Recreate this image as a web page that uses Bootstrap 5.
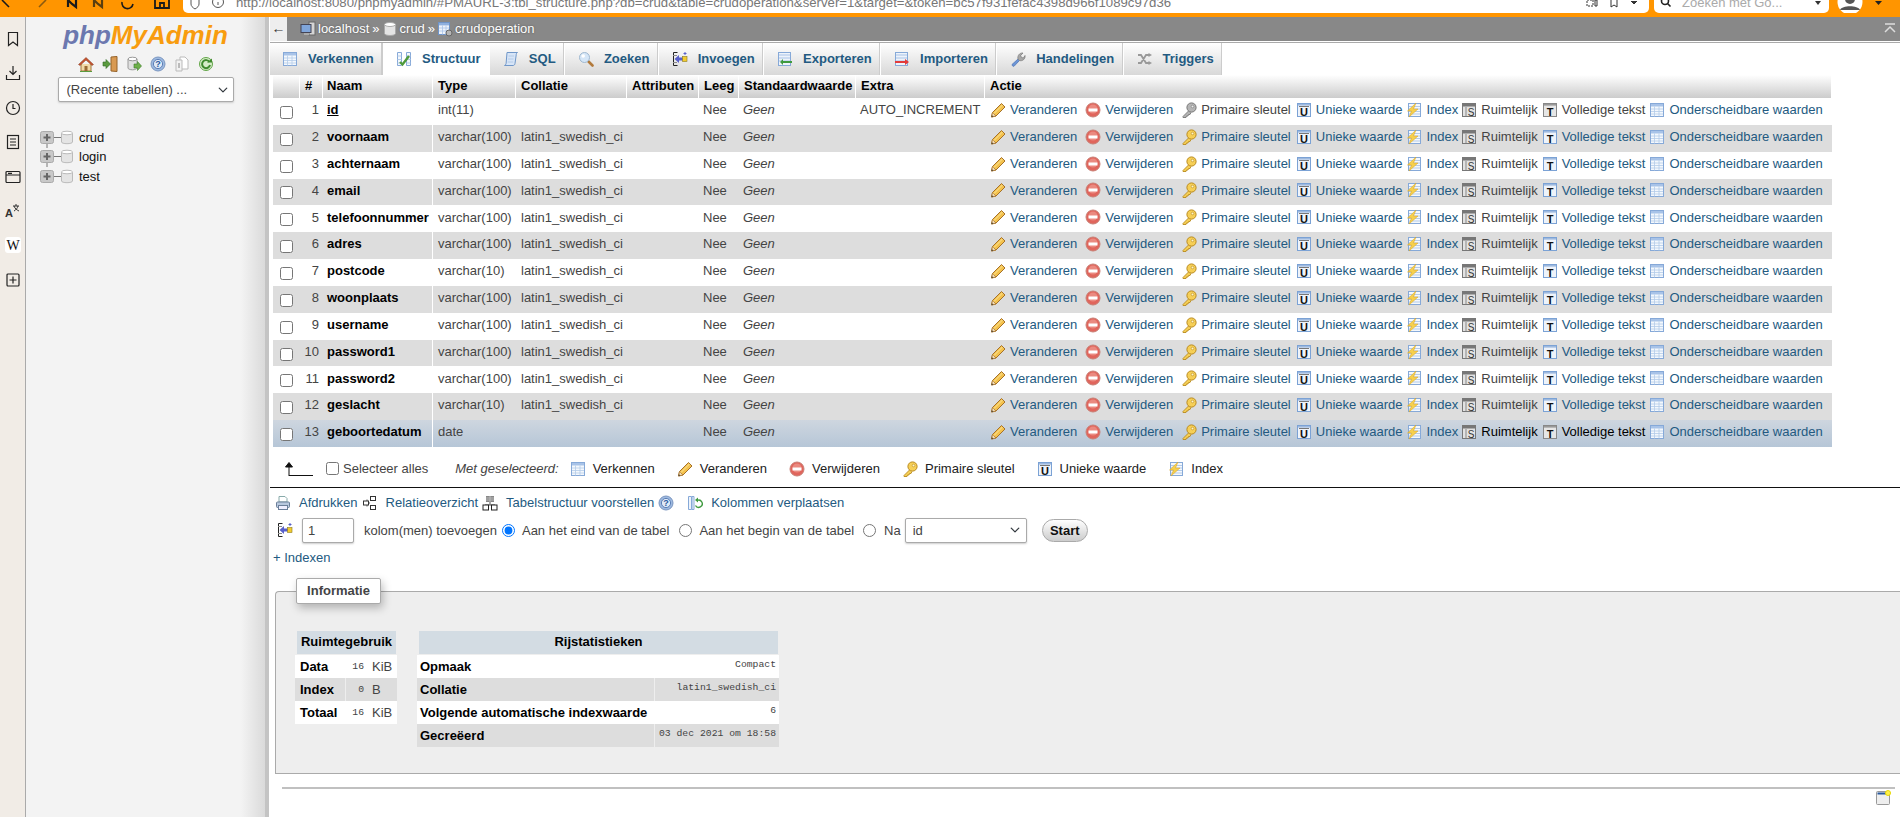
<!DOCTYPE html>
<html lang="nl">
<head>
    <meta charset="UTF-8">
    <meta name="viewport" content="width=device-width, initial-scale=1.0">
    <title>phpMyAdmin</title>
    <link href="https://cdn.jsdelivr.net/npm/bootstrap@5.3.0/dist/css/bootstrap.min.css" rel="stylesheet">
    <style>
        html, body { height: 100%; }
        body { font-family: "Liberation Sans", Arial, sans-serif; font-size: 13px; line-height: 1.2; color: #444; background: #fff; overflow: hidden; }
        a { color: #235a81; text-decoration: none; }
        .ico { width: 16px; height: 16px; flex: none; display: block; }

        /* browser chrome, cut off at the top of the capture */
        .browser-bar { height: 17px; background: #ff9500; overflow: hidden; flex: none; }
        .tool-svg { width: 183px; height: 13px; flex: none; display: block; }
        .url-box { width: 1466px; height: 13px; background: #fff; border-radius: 0 0 5px 5px; overflow: hidden; flex: none; }
        .url-text { margin: -5px 0 0 5px; color: #777; font-size: 13.2px; white-space: nowrap; line-height: 16px; width: 950px; overflow: hidden; }
        .search-box { width: 175px; height: 13px; margin-left: 5px; background: #fff; border-radius: 0 0 5px 5px; overflow: hidden; flex: none; }
        .search-text { margin: -5px 0 0 6px; color: #aaa; line-height: 16px; width: 125px; }
        .browser-right { width: 71px; height: 13px; flex: none; display: block; }

        .app-body { height: 800px; }
        .side-strip { width: 26px; flex: none; background: #f1ece6; border-right: 1px solid #aaa; padding-top: 14px; }
        .strip-ico { width: 16px; height: 16px; display: block; margin: 0 0 18.4px 0; }
        .nav-panel { width: 239px; flex: none; background: linear-gradient(to right, #f3f3f3 0, #f3f3f3 90%, #dadada 100%); }
        .logo-text { margin-top: 5px; font-size: 26px; line-height: 27px; font-weight: 700; font-style: italic; color: #f89c0e; letter-spacing: 0; }
        .logo-text span { color: #6c78af; }
        .nav-ico-row { height: 16px; margin-top: 7px; gap: 8px; }
        .recent-select { width: 176px; height: 25px; margin-top: 5px; padding: 0 20px 0 8px; font-size: 13px; color: #444; border: 1px solid #aaa; border-radius: 2px; background-position: right 4px center; background-size: 12px 10px; font-family: inherit; box-shadow: 0 1px 2px #ccc; }
        .db-tree { margin: 26px 0 0 14px; list-style: none; padding: 0; }
        .db-tree li { height: 19.5px; display: flex; align-items: center; color: #111; }
        .tree-svg { width: 39px; height: 20px; flex: none; display: block; }
        .splitter { width: 4px; flex: none; background: #c4c4c4; margin-right: 1px; }

        .main-col { width: 1630px; flex: none; }
        .crumb-bar { height: 26px; background: #888; border-bottom: 1px solid #aaa; box-shadow: inset 0 -1px 0 #fff; color: #fff; flex: none; padding-bottom: 2px; }
        .back-box { width: 17px; height: 24px; background: #eee; color: #333; text-align: center; line-height: 22px; font-size: 14px; margin-right: 13px; }
        .crumb-item { text-shadow: 0 0 2px #555; }
        .crumb-sep { margin: 0 2px 0 3px; }
        .crumb-bar .ico { margin-right: 2px; }
        .crumb-up { margin-left: auto; margin-right: 2px; }

        .tab-row { height: 32px; list-style: none; margin: 0; padding: 0; flex: none; }
        .tab-item { display: flex; align-items: center; padding: 0 8.3px 0 13px; font-weight: 700; color: #235a81; background: linear-gradient(to bottom, #fff, #d8d8d8); border-right: 1px solid #fff; box-shadow: inset -1px 0 0 #ccc; }
        .tab-item:first-child { padding-left: 12px; }
        .tab-item .ico { margin-right: 10px; }
        .tab-item.is-active { background: #fff; box-shadow: 1px 0 0 #ccc, -1px 0 0 #ccc; }

        .fld-tbl { margin-left: 3px; width: 1559px; table-layout: fixed; border-collapse: separate; border-spacing: 0; flex: none; }
        .fld-tbl th { height: 23px; font-weight: 700; color: #000; background: linear-gradient(to bottom, #fff, #ccc); padding: 0 0 2px 5px; border-right: 1px solid #fff; white-space: nowrap; }
        .fld-tbl th.head-name { padding-left: 4px; }
        .fld-tbl td { height: 26.846px; padding: 0 0 3px 4px; white-space: nowrap; vertical-align: middle; }
        .fld-tbl tbody tr:nth-child(even) td { background: #ddd; }
        .fld-tbl tbody tr.is-hover td { background: linear-gradient(to bottom, #ced6df, #b6c6d7); }
        .fld-tbl input { margin: 2px 0 0 7px; display: block; }
        .fld-tbl td.cell-chk { padding: 0; }
        .fld-tbl td.cell-num { text-align: right; padding: 0 4px 3px 0; }
        .fld-tbl td.cell-name { font-weight: 700; color: #000; border-right: 1px solid #fff; }
        .fld-tbl td.cell-type { padding-left: 5px; }
        .fld-tbl td.cell-act { padding-left: 5px; }
        .act-row { display: flex; align-items: center; }
        .act-item { display: flex; align-items: center; margin-right: 4px; color: #235a81; }
        .act-item .ico { margin-right: 4px; }
        .act-item.wide-gap { margin-right: 8px; }
        .act-item.mid-gap { margin-right: 5px; }
        .act-item.small-gap { margin-right: 3px; }
        .act-item.is-off { color: #444; }
        .is-hover .act-item.is-off { color: #000; }

        .sel-bar { height: 41px; padding: 4px 0 0 15px; border-bottom: 1px solid #111; flex: none; }
        .sel-bar input { margin: 0 4px 0 13px; }
        .sel-note { font-style: italic; margin: 0 11px 0 27px; }
        .sel-item { color: #222; margin-right: 22px; }
        .sel-item .ico { margin-right: 7px; }
        .link-row { height: 30px; padding-left: 5px; flex: none; }
        .link-row .ico { margin-right: 8px; }
        .link-row .ico.help-ico { margin-right: 13px; }
        .link-row a { margin-right: 4px; }
        .form-row { height: 25px; padding-left: 7px; flex: none; }
        .form-row input[type=radio] { margin-top: 0; margin-right: 0; margin-bottom: 0; flex: none; }
        .col-count { width: 52px; height: 25px; margin: 0 10px 0 9px; padding: 0 5px; font-size: 13px; color: #444; border: 1px solid #aaa; border-radius: 2px; box-shadow: 0 1px 2px #ccc; }
        .gap-l5 { margin-left: 5px; }
        .gap-l7 { margin-left: 7px; }
        .gap-l8 { margin-left: 8px; }
        .gap-l9 { margin-left: 9px; }
        .gap-l10 { margin-left: 10px; }
        .after-select { width: 122px; height: 25px; margin-left: 4px; padding: 0 20px 0 7px; font-size: 13px; color: #444; font-family: inherit; border: 1px solid #aaa; border-radius: 2px; background-position: right 5px center; background-size: 12px 10px; box-shadow: 0 1px 2px #ccc; }
        .start-btn { margin-left: 15px; width: 46px; height: 23px; padding: 0; font-size: 13px; font-weight: 700; color: #111; background: linear-gradient(to bottom, #fff, #ccc); border: 1px solid #aaa; border-radius: 12px; }
        .index-link { margin: 7px 0 0 3px; height: 16px; flex: none; }

        .info-box { position: relative; height: 183px; margin: 25px 0 0 5px; background: #eee; border: 1px solid #aaa; border-right: 0; border-radius: 4px 0 0 0; padding: 39px 0 0 19px; flex: none; }
        .info-legend { position: absolute; left: 20px; top: -14px; width: 85px; height: 26px; background: #fff; border: 1px solid #aaa; border-radius: 2px; box-shadow: 2px 4px 8px rgba(0,0,0,.25); font-weight: 700; text-align: center; line-height: 24px; }
        .stat-tbl { border-collapse: separate; border-spacing: 0; }
        .stat-tbl th { height: 24px; text-align: center; font-weight: 700; color: #000; padding: 0 0 1px; background: #d3dce3; background-clip: padding-box; border-left: 2px solid transparent; border-right: 1px solid transparent; border-bottom: 1px solid transparent; }
        .stat-tbl td { height: 23px; background: #fff; padding: 0 3px; white-space: nowrap; }
        .stat-tbl tr:nth-child(even) td { background: #ddd; }
        .stat-tbl td:first-child { font-weight: 700; color: #000; border-right: 1px solid #fff; }
        .stat-tbl tr:nth-child(even) td:first-child { border-right-color: #eee; }
        .stat-use { width: 102px; }
        .stat-use td:first-child { width: 51px; padding-left: 5px; }
        .stat-row { width: 362px; margin-left: 20px; }
        .stat-row td:first-child { width: 238px; }
        .mono-val { font-family: "Liberation Mono", monospace; font-size: 9.75px; }
        .stat-row .mono-val { display: block; text-align: right; margin-top: -4px; }
        .stat-use .mono-val { display: inline-block; width: 15px; text-align: right; margin-right: 8px; vertical-align: 2px; }
        .foot-rule { height: 2px; margin: 13px 5px 0 12px; background: #c0c0c0; flex: none; }
        .foot-svg { width: 16px; height: 16px; margin: 1px 9px 0 auto; display: block; }
    </style>
</head>
<body>
    <!-- shared icons -->
    <svg width="0" height="0" class="d-block" aria-hidden="true">
        <defs>
            <symbol id="i-pencil" viewBox="0 0 16 16"><path d="M1.500 15l1-4.500L11.500 1.500l3.500 3.500-9 9z" fill="#f4c24d" stroke="#a5712a"/><path d="M1.500 15l1-4.500 3.500 3.500z" fill="#f3dcb5" stroke="#a5712a" stroke-width=".7"/><path d="M4 11.500l8.500-8.500" stroke="#fbe59a"/><path d="M1.500 15l.4-1.800 1.400 1.400z" fill="#333"/></symbol>
            <symbol id="i-remove" viewBox="0 0 16 16"><circle cx="8" cy="8" r="7" fill="#e0655c" stroke="#c98076"/><circle cx="8" cy="7" r="4.500" fill="#ea8a80"/><rect x="3.500" y="6.500" width="9" height="3" fill="#fff"/></symbol>
            <symbol id="i-key" viewBox="0 0 16 16"><path d="M7.500 9L2 14.500v1h3l.5-1.500H7l.5-1.500h1.500l1-2" fill="#f6cf56" stroke="#b98a1e" stroke-width=".9"/><circle cx="10.500" cy="5.500" r="4.600" fill="#f6cf56" stroke="#b98a1e"/><circle cx="11.500" cy="4.500" r="1.300" fill="#fff6c8" stroke="#b98a1e" stroke-width=".6"/></symbol>
            <symbol id="i-key-off" viewBox="0 0 16 16"><path d="M7.500 9L2 14.500v1h3l.5-1.500H7l.5-1.500h1.500l1-2" fill="#b5b5b5" stroke="#777" stroke-width=".9"/><circle cx="10.500" cy="5.500" r="4.600" fill="#b5b5b5" stroke="#777"/><circle cx="11.500" cy="4.500" r="1.300" fill="#eee" stroke="#777" stroke-width=".6"/></symbol>
            <symbol id="i-browse" viewBox="0 0 16 16"><rect x="1.500" y="1.500" width="13" height="13" fill="#f4f8fd" stroke="#86a9d8"/><rect x="2" y="2" width="12" height="2.500" fill="#a8c3e8"/><path d="M2 7h12M2 9.500h12M2 12h12M5.500 4.500v10M10 4.500v10" stroke="#b4cbe8" stroke-width=".8"/></symbol>
            <symbol id="i-unique" viewBox="0 0 16 16"><rect x="1.500" y="1.500" width="13" height="13" fill="#eef3fa" stroke="#7ba2d5"/><rect x="2" y="2" width="12" height="1.600" fill="#9db9df"/><path d="M3 4.500h10" stroke="#777"/><text x="8" y="14" text-anchor="middle" font-family="Liberation Sans" font-weight="700" font-size="11" fill="#111">U</text></symbol>
            <symbol id="i-index" viewBox="0 0 16 16"><rect x="2.500" y="1.500" width="12" height="13" fill="#f4f8fd" stroke="#86a9d8"/><path d="M3 4.500h11M3 7h11M3 9.500h11M3 12h11" stroke="#b4cbe8"/><path d="M10 1L1.500 9h4l-2.500 6L12 7H7.500z" fill="#f6d04e" stroke="#d9a320" stroke-width=".5"/></symbol>
            <symbol id="i-spatial" viewBox="0 0 16 16"><rect x="1.500" y="1.500" width="13" height="13" fill="#e2e2e2" stroke="#777"/><rect x="2" y="2" width="12" height="2.500" fill="#777"/><path d="M5 5v9" stroke="#888"/><text x="10" y="14" text-anchor="middle" font-family="Liberation Sans" font-size="10" fill="#333">S</text></symbol>
            <symbol id="i-full" viewBox="0 0 16 16"><rect x="1.500" y="1.500" width="13" height="13" fill="#eef3fa" stroke="#7ba2d5"/><rect x="2" y="2" width="12" height="1.600" fill="#9db9df"/><text x="8" y="14" text-anchor="middle" font-family="Liberation Sans" font-weight="700" font-size="11" fill="#111">T</text></symbol>
            <symbol id="i-full-off" viewBox="0 0 16 16"><rect x="1.500" y="1.500" width="13" height="13" fill="#e6e6e6" stroke="#888"/><rect x="2" y="2" width="12" height="1.600" fill="#999"/><text x="8" y="14" text-anchor="middle" font-family="Liberation Sans" font-weight="700" font-size="11" fill="#111">T</text></symbol>
            <symbol id="i-structure" viewBox="0 0 16 16"><path d="M1.500 1.500h4v13h-4zM10.500 1.500h4v13h-4z" fill="#f4f8fd" stroke="#86a9d8"/><path d="M1.500 5h4M1.500 8.500h4M1.500 12h4M10.500 5h4M10.500 8.500h4M10.500 12h4" stroke="#b4cbe8"/><path d="M4 11l2.500 2.500L13 5" fill="none" stroke="#4e9a3a" stroke-width="2.400"/></symbol>
            <symbol id="i-sql" viewBox="0 0 16 16"><path d="M4 1.500h10.500c-1 .5-1.300 1.500-1.300 2.500L12 12.500c-.2 1.300-1 2-2 2H1.500c1-.3 1.500-1.100 1.600-2z" fill="#d7e5f7" stroke="#7097c9"/><path d="M5.500 5h5.500M5 8h5.500M4.700 11h5.500" stroke="#b4cbe8"/></symbol>
            <symbol id="i-search" viewBox="0 0 16 16"><path d="M10 10l4.500 4.500" stroke="#b27a3c" stroke-width="2.600" stroke-linecap="round"/><circle cx="6.500" cy="6.500" r="5" fill="#d5e6f7" stroke="#9fb8d0"/><circle cx="5.200" cy="5" r="1.800" fill="#fff"/></symbol>
            <symbol id="i-insert" viewBox="0 0 16 16"><path d="M5.500 1.500h-4v13h4" fill="none" stroke="#222"/><path d="M1 4.500h4M1 11.500h4" stroke="#888"/><path d="M2.500 8L7 4v2.500h4v3H7V12z" fill="#5860c9"/><rect x="10.500" y="5.500" width="4.500" height="5" fill="#f3cb2f" stroke="#8a7a20" stroke-width=".6"/><path d="M13 1v3M11.500 2.500h3" stroke="#5860c9"/></symbol>
            <symbol id="i-export" viewBox="0 0 16 16"><rect x="1.500" y="1.500" width="12" height="13" fill="#eef3fa" stroke="#86a9d8"/><path d="M2 4h11M2 7h11M2 10h11" stroke="#a8c3e8"/><path d="M3 11l3-3v2h9v2H6v2z" fill="#3f9a3f"/></symbol>
            <symbol id="i-import" viewBox="0 0 16 16"><rect x="1.500" y="1.500" width="12" height="13" fill="#eef3fa" stroke="#86a9d8"/><path d="M2 4h11M2 7h11M2 10h11" stroke="#a8c3e8"/><path d="M1 10h10V8l4 3-4 3v-2H1z" fill="#e23b3b"/></symbol>
            <symbol id="i-wrench" viewBox="0 0 16 16"><path d="M8 8l-6 5.500c0 1 .8 2 2 1.800L9.500 9.500" fill="#6c95d6" stroke="#5478b8" stroke-width=".8"/><path d="M8 8c-.8-3 1.400-6.400 5-6l-2.300 2.400.7 2 2 .6L15 4.500c.6 3.300-2.400 6-5.500 5z" fill="#a8a8a8" stroke="#777" stroke-width=".7"/></symbol>
            <symbol id="i-trigger" viewBox="0 0 16 16"><path d="M1 4h3l5 8h3M1 12h3l5-8h3" fill="none" stroke="#999" stroke-width="1.800"/><path d="M11.500 2l3.500 2-3.500 2zM11.500 10l3.500 2-3.500 2z" fill="#999"/></symbol>
            <symbol id="i-print" viewBox="0 0 16 16"><path d="M4 1.500h6l2 2V7H4z" fill="#fff" stroke="#8aa"/><rect x="1.500" y="7" width="13" height="5.500" rx="1" fill="#b8c8de" stroke="#6b7f99"/><rect x="3.500" y="10.500" width="9" height="4" fill="#eef" stroke="#6b7f99"/></symbol>
            <symbol id="i-rel" viewBox="0 0 16 16"><path d="M2 8h6M5 4.500v7" stroke="#555"/><g fill="#fff" stroke="#333"><rect x="8.500" y="1.500" width="5" height="4"/><rect x="8.500" y="10.500" width="5" height="4"/><rect x="1.500" y="6" width="5" height="4"/></g></symbol>
            <symbol id="i-design" viewBox="0 0 16 16"><rect x="4" y="1" width="8" height="6" fill="#888"/><path d="M4 3h8M4 5h8M8 1v6" stroke="#ccc" stroke-width=".7"/><path d="M8 7v3M3 10h10" stroke="#555"/><g fill="#fff" stroke="#222"><rect x="1" y="10" width="5.500" height="5"/><rect x="9.500" y="10" width="5.500" height="5"/></g></symbol>
            <symbol id="i-help" viewBox="0 0 16 16"><circle cx="8" cy="8" r="7" fill="#9db9e0" stroke="#7b96c0"/><circle cx="8" cy="8" r="4.600" fill="#dfe9f7" stroke="#5c7fb5"/><text x="8" y="11" text-anchor="middle" font-family="Liberation Sans" font-weight="700" font-size="9" fill="#2c5a9e">?</text></symbol>
            <symbol id="i-move" viewBox="0 0 16 16"><path d="M1.500 1.500h3v13h-3zM5 1.500h2v13H5z" fill="#eef3fa" stroke="#86a9d8"/><path d="M10 5.500a3.600 3.600 0 1 1-1.500 5" fill="none" stroke="#3f9a3f" stroke-width="1.400"/><path d="M11 2.500v5l-3-2.500z" fill="#3f9a3f"/></symbol>
            <symbol id="i-db" viewBox="0 0 16 16"><path d="M2.500 3.500v9c0 1.200 2.500 2 5.500 2s5.500-.8 5.500-2v-9z" fill="#e4e4e4" stroke="#aaa"/><ellipse cx="8" cy="3.500" rx="5.500" ry="2" fill="#fff" stroke="#aaa"/></symbol>
            <symbol id="i-host" viewBox="0 0 16 16"><rect x="9" y="1" width="6" height="13" fill="#d5d5d5" stroke="#666"/><rect x="1" y="3.500" width="10" height="8" fill="#7fa5da" stroke="#445"/><rect x="4" y="12" width="5" height="2" fill="#aaa"/></symbol>
            <symbol id="i-tbl" viewBox="0 0 16 16"><rect x="1.500" y="1.500" width="11" height="12" fill="#eef3fa" stroke="#6f94c8"/><rect x="2" y="2" width="10" height="2.400" fill="#8fb0de"/><path d="M2 7h10M2 10h10M5.500 4.500v9M9 4.500v9" stroke="#a8c3e8" stroke-width=".8"/><circle cx="12" cy="12" r="3" fill="#b5b5b5" stroke="#666"/></symbol>
            <symbol id="i-home" viewBox="0 0 16 16"><path d="M3 8v7h10V8" fill="#f0d9a8" stroke="#a6793a"/><rect x="6.500" y="10" width="3" height="5" fill="#9b6b35"/><path d="M.5 8.500L8 1.500l7.500 7-1.500 1L8 4 2 9.500z" fill="#c9532f" stroke="#7a3a20" stroke-width=".5"/><path d="M2 15.500h12" stroke="#5a9a3f"/></symbol>
            <symbol id="i-exit" viewBox="0 0 16 16"><path d="M9 1l6-.5v15l-6-.5z" fill="#d99a52" stroke="#94622a"/><path d="M1 6h3V3.500L8.500 8 4 12.500V10H1z" fill="#5a9a3f" stroke="#2f6a25" stroke-width=".6"/></symbol>
            <symbol id="i-dbgo" viewBox="0 0 16 16"><path d="M2 3v9c0 1 2 1.800 4.500 1.800S11 13 11 12V3z" fill="#e0e0e0" stroke="#999"/><ellipse cx="6.500" cy="3" rx="4.500" ry="1.800" fill="#fff" stroke="#999"/><path d="M8 8h3.500V5.500L15.500 10l-4 4.500V12H8z" fill="#6eb04a" stroke="#3d7a2a" stroke-width=".6"/></symbol>
            <symbol id="i-docs" viewBox="0 0 16 16"><path d="M6 1h5l3 3v9H6z" fill="#fff" stroke="#bbb"/><path d="M2 4h6v11H2z" fill="#f2f2f2" stroke="#bbb"/><rect x="4" y="7" width="2" height="5" fill="#bbb"/></symbol>
            <symbol id="i-reload" viewBox="0 0 16 16"><circle cx="8" cy="8" r="6.500" fill="#d6ecc9" stroke="#62a647"/><path d="M11.500 6A4 4 0 1 0 12 9" fill="none" stroke="#3f8a2e" stroke-width="2"/><path d="M9 6.500h5v-4z" fill="#3f8a2e"/></symbol>
            <symbol id="i-window" viewBox="0 0 16 16"><rect x="1.500" y="1.500" width="13" height="13" rx="1" fill="#eee" stroke="#999"/><rect x="2.500" y="2.500" width="9" height="2" fill="#2a5a9e"/><circle cx="13" cy="3" r="2.500" fill="#fff14d" stroke="#e8d800"/></symbol>
        </defs>
    </svg>

    <div class="browser-bar d-flex">
        <svg class="tool-svg" viewBox="0 0 183 13" fill="none" stroke="#1a1a1a" stroke-width="1.600">
            <path d="M2 0l7 7"/><path d="M39 7l7-7" stroke="#8a5a10"/>
            <path d="M68 0v7M68 0l4 4 4 3V0" stroke-width="2.200"/><path d="M94 0v7M94 0l4 4 4 3V0" stroke="#5a3f10" stroke-width="2.200"/>
            <path d="M122 2a5.500 5.500 0 0 0 11 2"/><path d="M155 0v8h14V0M160 8V3h4v5" stroke-width="1.800"/>
        </svg>
        <div class="url-box d-flex">
            <svg class="flex-none" width="48" height="13" viewBox="0 0 48 13" fill="none" stroke="#555"><path d="M8 0v4c0 2 1.500 3.500 4 5 2.500-1.500 4-3 4-5V0"/><circle cx="35" cy="2" r="5.500"/><path d="M35 2v3"/></svg>
            <div class="url-text">http://localhost:8080/phpmyadmin/#PMAURL-3:tbl_structure.php?db=crud&amp;table=crudoperation&amp;server=1&amp;target=&amp;token=bc57f931fefac4398d966f1089c97d36</div>
            <svg class="ms-auto" width="65" height="13" viewBox="0 0 65 13" fill="none" stroke="#333"><rect x="3" y="0" width="6" height="6" stroke-dasharray="2 1"/><path d="M11 0h2v6h-2z"/><path d="M27 0v7l3-2 3 2V0"/><path d="M47 1l3 3 3-3" fill="#333"/></svg>
        </div>
        <div class="search-box d-flex">
            <svg width="22" height="13" viewBox="0 0 22 13" fill="none" stroke="#222" stroke-width="1.600"><circle cx="11" cy="1" r="3.500"/><path d="M13.500 3.500l3 3"/></svg>
            <div class="search-text">Zoeken met Go...</div>
            <svg class="ms-auto" width="16" height="13" viewBox="0 0 16 13"><path d="M2 1h6L5 5z" fill="#333"/></svg>
        </div>
        <svg class="browser-right" viewBox="0 0 71 13"><circle cx="21" cy="2" r="12.500" fill="#fff"/><circle cx="21" cy="-1" r="5" fill="#555"/><path d="M11 10c2-5 18-5 20 0" fill="#555"/><path d="M46 1h7l-3.500 4z" fill="#222"/></svg>
    </div>

    <div class="app-body d-flex">
        <div class="side-strip d-flex flex-column align-items-center">
            <svg class="strip-ico" viewBox="0 0 16 16" fill="none" stroke="#222" stroke-width="1.200"><path d="M3.500 1.500h9v13L8 11l-4.500 3.500z"/></svg>
            <svg class="strip-ico" viewBox="0 0 16 16" fill="none" stroke="#222" stroke-width="1.200"><path d="M8 1v8M4.500 6L8 9.500 11.500 6M1.500 10v4.500h13V10"/></svg>
            <svg class="strip-ico" viewBox="0 0 16 16" fill="none" stroke="#222" stroke-width="1.200"><circle cx="8" cy="8" r="6.500"/><path d="M8 4v4.500h2.500"/></svg>
            <svg class="strip-ico" viewBox="0 0 16 16" fill="none" stroke="#222" stroke-width="1.200"><rect x="2.500" y="1.500" width="11" height="13"/><path d="M5 5h6M5 8h6M5 11h6"/></svg>
            <svg class="strip-ico" viewBox="0 0 16 16" fill="none" stroke="#222" stroke-width="1.200"><rect x="1" y="2.500" width="14" height="11" rx="1"/><path d="M1 6h14M3 4.300h4"/></svg>
            <svg class="strip-ico" viewBox="0 0 16 16"><text x="0" y="14" font-family="Liberation Sans" font-weight="700" font-size="11" fill="#333">A</text><path d="M8 3h6M11 1v2M9 3c1 3 3 4 5 5M13 3c-.5 2-2 4-4 5" fill="none" stroke="#333"/></svg>
            <svg class="strip-ico" viewBox="0 0 16 16"><rect width="16" height="16" rx="3" fill="#fff"/><text x="8" y="12.500" text-anchor="middle" font-family="Liberation Serif" font-size="14" fill="#111">W</text></svg>
            <svg class="strip-ico" viewBox="0 0 16 16" fill="none" stroke="#222" stroke-width="1.200"><rect x="2" y="2" width="12" height="12" rx="1"/><path d="M8 4.500v7M4.500 8h7"/></svg>
        </div>

        <div class="nav-panel d-flex flex-column">
            <div class="logo-text text-center"><span>php</span>MyAdmin</div>
            <div class="nav-ico-row d-flex justify-content-center">
                <svg class="ico"><use href="#i-home"/></svg>
                <svg class="ico"><use href="#i-exit"/></svg>
                <svg class="ico"><use href="#i-dbgo"/></svg>
                <svg class="ico"><use href="#i-help"/></svg>
                <svg class="ico"><use href="#i-docs"/></svg>
                <svg class="ico"><use href="#i-reload"/></svg>
            </div>
            <div class="d-flex justify-content-center">
                <select class="form-select recent-select"><option>(Recente tabellen) ...</option></select>
            </div>
            <ul class="db-tree" id="dbTree"></ul>
        </div>
        <div class="splitter"></div>

        <div class="main-col d-flex flex-column">
            <div class="crumb-bar d-flex align-items-center">
                <div class="back-box">←</div>
                <svg class="ico"><use href="#i-host"/></svg><span class="crumb-item">localhost</span><span class="crumb-sep">»</span>
                <svg class="ico"><use href="#i-db"/></svg><span class="crumb-item">crud</span><span class="crumb-sep">»</span>
                <svg class="ico"><use href="#i-tbl"/></svg><span class="crumb-item">crudoperation</span>
                <svg class="ico crumb-up" viewBox="0 0 16 16" fill="none" stroke="#ddd" stroke-width="1.500"><path d="M3 3h10M3 11l5-5 5 5"/></svg>
            </div>

            <ul class="tab-row d-flex" id="tabRow"></ul>

            <table class="fld-tbl">
                <colgroup>
                    <col style="width:27px"><col style="width:23px"><col style="width:110px"><col style="width:83px"><col style="width:111px"><col style="width:72px"><col style="width:40px"><col style="width:117px"><col style="width:129px"><col>
                </colgroup>
                <thead>
                    <tr><th></th><th>#</th><th class="head-name">Naam</th><th>Type</th><th>Collatie</th><th>Attributen</th><th>Leeg</th><th>Standaardwaarde</th><th>Extra</th><th>Actie</th></tr>
                </thead>
                <tbody id="fieldRows"></tbody>
            </table>

            <div class="sel-bar d-flex align-items-center">
                <svg width="28" height="14" viewBox="0 0 28 14" fill="none" stroke="#111"><path d="M4 14V2M0.500 5L4 0.500 7.500 5z" fill="#111"/><path d="M4 13.500h24"/></svg>
                <input type="checkbox" id="selAll"><label for="selAll">Selecteer alles</label>
                <span class="sel-note">Met geselecteerd:</span>
                <span class="sel-item d-flex align-items-center"><svg class="ico"><use href="#i-browse"/></svg>Verkennen</span>
                <span class="sel-item d-flex align-items-center"><svg class="ico"><use href="#i-pencil"/></svg>Veranderen</span>
                <span class="sel-item d-flex align-items-center"><svg class="ico"><use href="#i-remove"/></svg>Verwijderen</span>
                <span class="sel-item d-flex align-items-center"><svg class="ico"><use href="#i-key"/></svg>Primaire sleutel</span>
                <span class="sel-item d-flex align-items-center"><svg class="ico"><use href="#i-unique"/></svg>Unieke waarde</span>
                <span class="sel-item d-flex align-items-center"><svg class="ico"><use href="#i-index"/></svg>Index</span>
            </div>

            <div class="link-row d-flex align-items-center">
                <svg class="ico"><use href="#i-print"/></svg><a href="#">Afdrukken</a>
                <svg class="ico"><use href="#i-rel"/></svg><a href="#">Relatieoverzicht</a>
                <svg class="ico"><use href="#i-design"/></svg><a href="#">Tabelstructuur voorstellen</a>
                <svg class="ico help-ico"><use href="#i-help"/></svg>
                <svg class="ico"><use href="#i-move"/></svg><a href="#">Kolommen verplaatsen</a>
            </div>

            <form class="form-row d-flex align-items-center" onsubmit="return false">
                <svg class="ico"><use href="#i-insert"/></svg>
                <input class="form-control col-count" type="text" value="1">
                <span>kolom(men) toevoegen</span>
                <input class="gap-l5" type="radio" name="where" id="w1" checked><label class="gap-l7" for="w1">Aan het eind van de tabel</label>
                <input class="gap-l10" type="radio" name="where" id="w2"><label class="gap-l7" for="w2">Aan het begin van de tabel</label>
                <input class="gap-l9" type="radio" name="where" id="w3"><label class="gap-l8" for="w3">Na</label>
                <select class="form-select after-select"><option>id</option></select>
                <button class="btn start-btn" type="submit">Start</button>
            </form>

            <div class="index-link"><a href="#">+ Indexen</a></div>

            <div class="info-box d-flex align-items-start">
                <div class="info-legend">Informatie</div>
                <table class="stat-tbl stat-use">
                    <thead><tr><th colspan="2">Ruimtegebruik</th></tr></thead>
                    <tbody>
                        <tr><td>Data</td><td><span class="mono-val">16</span>KiB</td></tr>
                        <tr><td>Index</td><td><span class="mono-val">0</span>B</td></tr>
                        <tr><td>Totaal</td><td><span class="mono-val">16</span>KiB</td></tr>
                    </tbody>
                </table>
                <table class="stat-tbl stat-row">
                    <thead><tr><th colspan="2">Rijstatistieken</th></tr></thead>
                    <tbody>
                        <tr><td>Opmaak</td><td><span class="mono-val">Compact</span></td></tr>
                        <tr><td>Collatie</td><td><span class="mono-val">latin1_swedish_ci</span></td></tr>
                        <tr><td>Volgende automatische indexwaarde</td><td><span class="mono-val">6</span></td></tr>
                        <tr><td>Gecreëerd</td><td><span class="mono-val">03 dec 2021 om 18:58</span></td></tr>
                    </tbody>
                </table>
            </div>
            <div class="foot-rule"></div>
            <svg class="foot-svg"><use href="#i-window"/></svg>
        </div>
    </div>

    <script>
        // Fields of the table
        const fields = [
            ['id', 'int(11)', '', 'AUTO_INCREMENT'],
            ['voornaam', 'varchar(100)', 'latin1_swedish_ci', ''],
            ['achternaam', 'varchar(100)', 'latin1_swedish_ci', ''],
            ['email', 'varchar(100)', 'latin1_swedish_ci', ''],
            ['telefoonnummer', 'varchar(100)', 'latin1_swedish_ci', ''],
            ['adres', 'varchar(100)', 'latin1_swedish_ci', ''],
            ['postcode', 'varchar(10)', 'latin1_swedish_ci', ''],
            ['woonplaats', 'varchar(100)', 'latin1_swedish_ci', ''],
            ['username', 'varchar(100)', 'latin1_swedish_ci', ''],
            ['password1', 'varchar(100)', 'latin1_swedish_ci', ''],
            ['password2', 'varchar(100)', 'latin1_swedish_ci', ''],
            ['geslacht', 'varchar(10)', 'latin1_swedish_ci', ''],
            ['geboortedatum', 'date', '', '']
        ];

        const tabs = [['browse', 'Verkennen'], ['structure', 'Structuur'], ['sql', 'SQL'], ['search', 'Zoeken'], ['insert', 'Invoegen'], ['export', 'Exporteren'], ['import', 'Importeren'], ['wrench', 'Handelingen'], ['trigger', 'Triggers']];

        const icon = name => `<svg class="ico"><use href="#i-${name}"/></svg>`;

        document.getElementById('tabRow').innerHTML = tabs.map((t, i) =>
            `<li class="tab-item ${i === 1 ? 'is-active' : ''}">${icon(t[0])}${t[1]}</li>`).join('');

        // Database tree in the left panel
        document.getElementById('dbTree').innerHTML = ['crud', 'login', 'test'].map((name, i) => `
            <li><svg class="tree-svg" viewBox="0 0 39 20">
                ${i < 2 ? '<path d="M7 13v7" stroke="#777"/>' : ''}
                <path d="M14 9.500h7" stroke="#777"/>
                <rect x=".5" y="3.500" width="13" height="12" rx="2" fill="#c8c8c8" stroke="#aaa"/>
                <path d="M7 6v7M3.500 9.500h7" stroke="#666" stroke-width="2"/>
                <path d="M21.500 5v9c0 1 2.500 1.700 5.500 1.700s5.500-.7 5.500-1.700V5z" fill="#e4e4e4" stroke="#bbb"/>
                <ellipse cx="27" cy="5" rx="5.500" ry="1.800" fill="#fff" stroke="#bbb"/>
            </svg>${name}</li>`).join('');

        // Actions of one row; the first row has its primary key and the text types have full text
        function actions(index) {
            const isId = index === 0, isDate = index === 12, noFull = isId || isDate;
            const item = (ico, text, cls) => `<span class="act-item ${cls || ''}">${icon(ico)}${text}</span>`;
            return '<div class="act-row">' +
                item('pencil', 'Veranderen', 'wide-gap') +
                item('remove', 'Verwijderen', 'wide-gap') +
                item(isId ? 'key-off' : 'key', 'Primaire sleutel', 'mid-gap' + (isId ? ' is-off' : '')) +
                item('unique', 'Unieke waarde') +
                item('index', 'Index', 'small-gap') +
                item('spatial', 'Ruimtelijk', 'is-off') +
                item(noFull ? 'full-off' : 'full', 'Volledige tekst', noFull ? 'is-off' : '') +
                item('browse', 'Onderscheidbare waarden') +
                '</div>';
        }

        document.getElementById('fieldRows').innerHTML = fields.map((f, i) => `
            <tr class="${i === 12 ? 'is-hover' : ''}">
                <td class="cell-chk"><input type="checkbox"></td>
                <td class="cell-num">${i + 1}</td>
                <td class="cell-name">${i === 0 ? '<u>' + f[0] + '</u>' : f[0]}</td>
                <td class="cell-type">${f[1]}</td>
                <td class="cell-type">${f[2]}</td>
                <td></td>
                <td>Nee</td>
                <td><em>Geen</em></td>
                <td>${f[3]}</td>
                <td class="cell-act">${actions(i)}</td>
            </tr>`).join('');
    </script>

    <script src="https://cdn.jsdelivr.net/npm/bootstrap@5.3.0/dist/js/bootstrap.bundle.min.js"></script>
</body>
</html>
